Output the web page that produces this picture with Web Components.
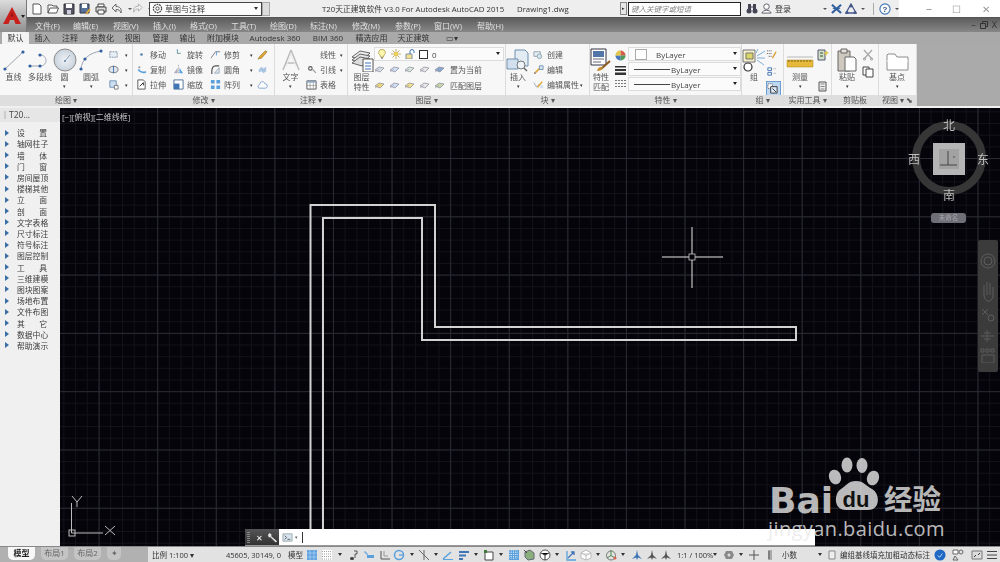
<!DOCTYPE html>
<html lang="zh"><head><meta charset="utf-8"><title>T20</title>
<style>
html,body{margin:0;padding:0;background:#000;width:1000px;height:562px;overflow:hidden}
</style></head><body>
<cad-app>
 <cad-title slot="title"></cad-title>
 <cad-menu slot="menu"></cad-menu>
 <cad-tabs slot="tabs"></cad-tabs>
 <cad-ribbon slot="ribbon">
  <rb-panel w="133" t="绘图 ▾">
   <rb-big n="line" l="直线" w="27"></rb-big><rb-big n="pline" l="多段线" w="26"></rb-big><rb-big n="circle" l="圆" w="23" c></rb-big><rb-big n="arc" l="圆弧" w="30" c></rb-big>
   <rb-col style="margin-left:2px"><rb-row n="rect" w="24" c></rb-row><rb-row n="hatch" w="24" c></rb-row><rb-row n="region" w="24" c></rb-row></rb-col>
  </rb-panel>
  <rb-panel w="142" t="修改 ▾" pad="3">
   <rb-col><rb-row n="move" l="移动" w="37"></rb-row><rb-row n="copy" l="复制" w="37"></rb-row><rb-row n="stretch" l="拉伸" w="37"></rb-row></rb-col>
   <rb-col><rb-row n="rotate" l="旋转" w="37"></rb-row><rb-row n="mirror" l="镜像" w="37"></rb-row><rb-row n="scale" l="缩放" w="37"></rb-row></rb-col>
   <rb-col><rb-row n="trim" l="修剪" w="47" c></rb-row><rb-row n="fillet" l="圆角" w="47" c></rb-row><rb-row n="array" l="阵列" w="47" c></rb-row></rb-col>
   <rb-col><rb-row n="pencil" w="12"></rb-row><rb-row n="explode" w="12"></rb-row><rb-row n="cloud" w="12"></rb-row></rb-col>
  </rb-panel>
  <rb-panel w="73" t="注释 ▾" pad="1">
   <rb-big n="text" l="文字" w="29" c></rb-big>
   <rb-col style="margin-left:1px"><rb-row n="" l="线性" w="41" c></rb-row><rb-row n="leader" l="引线" w="41" c></rb-row><rb-row n="table" l="表格" w="41"></rb-row></rb-col>
  </rb-panel>
  <rb-panel w="158" t="图层 ▾" pad="1">
   <rb-big n="layers" l="图层<br>特性" w="25"></rb-big>
   <rb-col style="gap:1px">
    <rb-combo w="130" h="14"><span style="display:inline-flex;align-items:center;gap:4px"><cad-i n="bulb" s="10"></cad-i><cad-i n="sun" s="10"></cad-i><cad-i n="lock" s="10"></cad-i><i style="width:7px;height:7px;border:1px solid #333;background:#fff"></i>0</span></rb-combo>
    <rb-layers l="置为当前" set="a"></rb-layers>
    <rb-layers l="匹配图层" set="b"></rb-layers>
   </rb-col>
  </rb-panel>
  <rb-panel w="84" t="块 ▾" pad="0">
   <rb-big n="insert" l="插入" w="24" c></rb-big>
   <rb-col style="margin-left:3px"><rb-row n="create" l="创建" w="54"></rb-row><rb-row n="bedit" l="编辑" w="54"></rb-row><rb-row n="battr" l="编辑属性" w="54" c></rb-row></rb-col>
  </rb-panel>
  <rb-panel w="152" t="特性 ▾" pad="0" corner>
   <rb-big n="match" l="特性<br>匹配" w="22"></rb-big>
   <rb-col style="margin-left:3px;width:10px;gap:3px;padding-top:3px"><cad-i n="wheel" s="11"></cad-i><cad-i n="lw" s="11"></cad-i><cad-i n="lt" s="11"></cad-i></rb-col>
   <rb-col style="margin-left:3px;gap:1px">
    <rb-combo w="113" h="14" ti="16"><span style="display:inline-flex;align-items:center;gap:9px"><i style="width:10px;height:9px;border:1px solid #aaa;background:#fff;margin-left:4px"></i>ByLayer</span></rb-combo>
    <rb-combo w="113" h="14"><span style="display:inline-flex;align-items:center;gap:1px"><i style="width:36px;height:1px;background:#444;margin-left:3px"></i>ByLayer</span></rb-combo>
    <rb-combo w="113" h="14"><span style="display:inline-flex;align-items:center;gap:1px"><i style="width:36px;height:1px;background:#444;margin-left:3px"></i>ByLayer</span></rb-combo>
   </rb-col>
  </rb-panel>
  <rb-panel w="42" t="组 ▾">
   <rb-big n="group" l="组" w="24"></rb-big>
   <rb-col style="gap:2px"><rb-row n="g1" w="14"></rb-row><rb-row n="g2" w="14"></rb-row><rb-row n="g3" w="15" on></rb-row></rb-col>
  </rb-panel>
  <rb-panel w="48" t="实用工具 ▾">
   <rb-big n="measure" l="测量" w="32" c></rb-big>
   <rb-col style="justify-content:space-between;padding:2px 0 3px;margin-left:1px"><cad-i n="quick" s="12"></cad-i><cad-i n="calc" s="11"></cad-i></rb-col>
  </rb-panel>
  <rb-panel w="47" t="剪贴板">
   <rb-big n="paste" l="粘贴" w="30" c></rb-big>
   <rb-col style="gap:5px;padding-top:2px"><cad-i n="cut" s="12"></cad-i><cad-i n="copyclip" s="12"></cad-i></rb-col>
  </rb-panel>
  <rb-panel w="38" t="视图 ▾ ⬊">
   <rb-big n="base" l="基点" w="36" c></rb-big>
  </rb-panel>
 </cad-ribbon>
 <cad-palette slot="palette">
  <pal-item>设置</pal-item><pal-item>轴网柱子</pal-item><pal-item>墙体</pal-item><pal-item>门窗</pal-item><pal-item>房间屋顶</pal-item><pal-item>楼梯其他</pal-item><pal-item>立面</pal-item><pal-item>剖面</pal-item><pal-item>文字表格</pal-item><pal-item>尺寸标注</pal-item><pal-item>符号标注</pal-item><pal-item>图层控制</pal-item><pal-item>工具</pal-item><pal-item>三维建模</pal-item><pal-item>图块图案</pal-item><pal-item>场地布置</pal-item><pal-item>文件布图</pal-item><pal-item>其它</pal-item><pal-item>数据中心</pal-item><pal-item>帮助演示</pal-item>
 </cad-palette>
 <cad-view slot="view"></cad-view>
 <cad-status slot="status"></cad-status>
</cad-app>
<baidu-mark></baidu-mark>
<script>
const BL='#3f74b5',GR='#7b7b7b',DK='#4a4a4a',LB='#5aa0dc';
const dot=(x,y,r=1.6,c='#2f5f9f')=>`<circle cx="${x}" cy="${y}" r="${r}" fill="${c}"/>`;
const I={
line:[24,`<path d="M3 21L21 4" stroke="#9aa6b2" stroke-width="1" fill="none"/>`+dot(3,21)+dot(21,4)],
pline:[24,`<path d="M2 18H12C20 18 20 7 12 7" stroke="#9aa6b2" fill="none"/>`+dot(2,18)+dot(12,18)+dot(12,7)],
circle:[24,`<defs><radialGradient id="g"><stop offset="0" stop-color="#eef2f7"/><stop offset="1" stop-color="#c9d2dc"/></radialGradient></defs><circle cx="12" cy="12" r="11" fill="url(#g)" stroke="#8b8b8b"/><path d="M12 13L17 7" stroke="#8fa4ba"/>`+dot(12,13,1,'#5f7fa5')],
arc:[24,`<path d="M2 21C3 11 10 5 22 3" stroke="#9aa6b2" fill="none"/>`+dot(2,21)+dot(6,11)+dot(22,3)],
rect:[12,`<path d="M2 3H10V9H2Z" fill="#e8eef5" stroke="#7a8b9c" stroke-dasharray="2 1"/>`],
hatch:[12,`<ellipse cx="6" cy="6" rx="5" ry="3.5" fill="#dde3ea" stroke="#777"/><path d="M6 2V10" stroke="#3f74b5"/>`],
region:[12,`<path d="M2 2H9V9H2Z" fill="#cfe0f2" stroke="#6f8fb0"/><path d="M7 7H11V11H7Z" fill="#fff" stroke="#777"/>`],
move:[10,dot(5,5,1.2,'#5a80ad')],
copy:[10,`<circle cx="3" cy="3" r="1" fill="#99a"/><path d="M2 5Q5 9 9 7" stroke="${LB}" stroke-width="1.6" fill="none"/>`],
stretch:[12,`<path d="M2 1H8L10 3V11H2Z" fill="#fff" stroke="#555"/><path d="M4 8L8 4M8 4V7" stroke="#222"/>`],
rotate:[10,`<path d="M4 1V4H7" stroke="#8aa" fill="none"/>`+dot(4,1,.7,LB)],
mirror:[12,`<path d="M5 10L1 10 5 4Z" fill="#aab"/><path d="M7 10L11 10 7 4Z" fill="${LB}"/><path d="M6 1V11" stroke="#999" stroke-dasharray="1 1"/>`],
scale:[12,`<path d="M1 1H11V11H1Z" fill="#fff" stroke="#4b6f95"/><path d="M1 5H7V11H1Z" fill="${BL}"/>`],
trim:[12,`<path d="M1 10L6 3H11" stroke="#778" fill="none"/><path d="M7 3V7" stroke="${LB}"/>`],
fillet:[12,`<path d="M10 2H6Q2 2 2 8V11" stroke="#555" fill="none" stroke-width="1.3"/><path d="M5 10L10 4V10Z" fill="#dfe6ee" stroke="#9ab"/>`],
array:[12,`<path d="M1 1h4v4H1zM7 1h4v4H7zM1 7h4v4H1zM7 7h4v4H7z" fill="${LB}"/>`],
pencil:[12,`<path d="M1 11L3 8 9 2 11 3 5 10Z" fill="#e0a63a" stroke="#8a6a20" stroke-width=".6"/>`],
explode:[12,`<path d="M2 6l3-3 2 2 3-2v5l-3 2-2-2-3 1z" fill="#a9c4e0"/>`],
cloud:[12,`<path d="M3 10C0 10 1 6 3 6 3 2 8 2 8.500 5 12 5 12 10 9 10Z" fill="#fff" stroke="#7aa0c8"/>`],
text:[24,`<path d="M12 2L4 22M12 2L20 22M7 15H17" stroke="#bcbcbc" stroke-width="1.5" fill="none"/><path d="M12 6L7 19M12 6L17 19" stroke="#ececec" fill="none"/>`],
leader:[10,`<circle cx="4" cy="4" r="1.6" fill="none" stroke="#555"/><path d="M6 5L9 8" stroke="#999"/>`],
table:[12,`<path d="M1 2H11V11H1Z" fill="#fff" stroke="#555"/><path d="M1 2H11V4H1Z" fill="#8ca6c4"/><path d="M1 7H11M4.500 4V11M8 4V11" stroke="#888" stroke-width=".7"/>`],
layers:[24,`<path d="M2 9L10 3 20 5 12 12Z" fill="#eee" stroke="#666"/><path d="M2 12L10 6 20 8 12 15Z" fill="#e4e4e4" stroke="#666"/><path d="M2 15L10 9 20 11 12 18Z" fill="#ddd" stroke="#666"/><path d="M13 11H23V24H13Z" fill="#fff" stroke="#555"/><path d="M15 15H21M15 18H21M15 21H21" stroke="#3f74b5"/>`],
bulb:[10,`<path d="M5 0.500a3 3 0 0 1 2 5.500L6.500 8h-3L3 6a3 3 0 0 1 2-5.500z" fill="#fff7b0" stroke="#a89030" stroke-width=".7"/><path d="M4 9h2" stroke="#555"/>`],
sun:[10,`<circle cx="5" cy="5" r="2.200" fill="#f7d95b" stroke="#a89030" stroke-width=".5"/><path d="M5 0V2M5 8V10M0 5H2M8 5H10M1.500 1.500L3 3M7 7L8.500 8.500M8.500 1.500L7 3M3 7L1.500 8.500" stroke="#a89030" stroke-width=".7"/>`],
lock:[10,`<path d="M1 5H7V10H1Z" fill="#f6df8f" stroke="#5f7fa5" stroke-width=".8"/><path d="M5 5V2.500A2 2 0 0 1 9 2.500V4" stroke="${BL}" fill="none"/>`],
insert:[24,`<path d="M9 2H19L22 5V18H9Z" fill="#e3ebf3" stroke="#6f8fb0"/><path d="M1 11H12V21H1Z" fill="#d2dfec" stroke="#6f8fb0"/><circle cx="15" cy="17" r="4" fill="#eef3f8" stroke="#777"/><path d="M18 20L21 23" stroke="#666" stroke-width="1.5"/>`],
create:[12,`<path d="M1 3H8V8H1Z" fill="#e6ecf3" stroke="#90a0b0"/><circle cx="7" cy="8" r="2.500" fill="#d8e2ed" stroke="#8aa"/>`],
bedit:[12,`<path d="M2 10L7 5" stroke="#e0a63a" stroke-width="1.800"/><path d="M7 2H11V6H7Z" fill="#dfe9f3" stroke="#6f8fb0"/>`+dot(2,10,1,'#889')],
battr:[12,`<path d="M1 4L4 9 6 6" stroke="#9ab" fill="none"/><path d="M5 9L10 3" stroke="#e0a63a" stroke-width="1.500"/><path d="M8 7H11V10H8Z" fill="#cfe0f2"/>`],
match:[24,`<path d="M2 1H17V17H2Z" fill="#fff" stroke="#334"/><path d="M4 3H15V9H4Z" fill="#5276a8"/><path d="M4 11H15M4 14H12" stroke="#667"/><path d="M12 21L21 13" stroke="#8a5a20" stroke-width="2"/><path d="M8 23C9 19 12 18 14 20 13 22 11 23 8 23Z" fill="#c58a2a"/>`],
wheel:[11,`<circle cx="5.500" cy="5.500" r="5" fill="#d9d9d9"/><path d="M5.500 5.500V.5A5 5 0 0 1 10.500 5.500Z" fill="#d95b4a"/><path d="M5.500 5.500H10.500A5 5 0 0 1 5.500 10.500Z" fill="#4f9a56"/><path d="M5.500 5.500V10.500A5 5 0 0 1 .5 5.500Z" fill="#4878c0"/><path d="M5.500 5.500H.5A5 5 0 0 1 5.500 .5Z" fill="#e2c64a"/>`],
lw:[11,`<path d="M0 2H11V3.500H0ZM0 5H11V7H0ZM0 8.500H11V11H0Z" fill="#333"/>`],
lt:[11,`<path d="M0 2.500H11M0 5.500H11M0 8.500H11" stroke="#777" stroke-dasharray="2 1"/>`],
group:[24,`<path d="M1 2H13V14H1Z" fill="#f3efcf" stroke="#777"/><path d="M4 5H11V11H4Z" fill="#d9d46c" stroke="#776"/><circle cx="6" cy="19" r="4" fill="#fff" stroke="#333" stroke-width="1.200"/><path d="M15 8L23 3M15 10H23M15 12L22 17M14 5L16 1" stroke="#7fb0dc"/>`],
g1:[12,`<path d="M1 2H7M1 5H7M3 8H6" stroke="#444" stroke-dasharray="1 1"/><path d="M7 10L11 3" stroke="#d69a2a" stroke-width="1.400"/>`],
g2:[12,`<path d="M2 2H6V5H2ZM2 7H6V10H2Z" fill="none" stroke="${BL}"/><path d="M8 3H11M8 8H11" stroke="#bbb"/>`],
g3:[12,`<path d="M1 1H6V6H1Z" fill="#fff" stroke="#555" stroke-dasharray="1 1"/><path d="M4 4H11V11H4Z" fill="#dbe8f6" stroke="#333"/><path d="M6 6L10 10" stroke="#333"/>`],
measure:[28,`<path d="M1 10H27V12H1Z" fill="#d7d7d7"/><path d="M1 14H27V21H1Z" fill="#e6b93a" stroke="#a9851f" stroke-width=".5"/><path d="M3 14v2M6 14v2M9 14v2M12 14v2M15 14v2M18 14v2M21 14v2M24 14v2" stroke="#7d621a"/>`],
quick:[12,`<path d="M1 1H8V11H1Z" fill="#cfe3c4" stroke="#557"/><path d="M3 4H6M3 7H6" stroke="#444"/><path d="M9 1l1 2 2 .5-2 1.500-1 2-1-2-1-1.500 2-.5z" fill="#e2c64a"/>`],
calc:[11,`<path d="M2 1H9V10H2Z" fill="#eee" stroke="#555"/><path d="M3.500 3H7.500M3.500 5.500H7.500M3.500 8H7.500" stroke="#888"/>`],
paste:[24,`<path d="M3 3H15V23H3Z" fill="#cfc8be" stroke="#666"/><path d="M6 1H12V5H6Z" fill="#e5e1da" stroke="#666"/><path d="M10 9H19L21 11V23H10Z" fill="#fff" stroke="#666"/>`],
cut:[12,`<path d="M2 1L10 10M10 1L2 10" stroke="#aaa" stroke-width="1.300"/><circle cx="2.500" cy="10" r="1.200" fill="none" stroke="#aaa"/><circle cx="9.500" cy="10" r="1.200" fill="none" stroke="#aaa"/>`],
copyclip:[12,`<path d="M1 1H7V9H1Z" fill="#fff" stroke="#444"/><path d="M4 3H11V11H4Z" fill="#fff" stroke="#444"/>`],
base:[24,`<path d="M2 7V22H23V9H12L10 6H3Z" fill="#fff" stroke="#8c8c8c"/><path d="M2 13H23" stroke="#fff"/>`],
qnew:[12,`<path d="M2 1H8L10 3V11H2Z" fill="#fff" stroke="#555"/>`],
qopen:[12,`<path d="M1 10V2H5L6 3H10V5M1 10L3 5H11.500L9.500 10Z" fill="#fff" stroke="#555"/>`],
qsave:[12,`<path d="M1 1H11V11H1Z" fill="#556" stroke="#333"/><path d="M3 1H9V5H3Z" fill="#fff"/><path d="M4 7H8V11H4Z" fill="#ccd"/>`],
qsaveas:[12,`<path d="M1 1H10V10H1Z" fill="#56709a" stroke="#334"/><path d="M3 1H8V5H3Z" fill="#fff"/><path d="M7 11L11 6" stroke="#e0a63a" stroke-width="2"/>`],
qprint:[12,`<path d="M3 1H9V4H3Z" fill="#fff" stroke="#444"/><path d="M1 4H11V9H1Z" fill="#ddd" stroke="#444"/><path d="M3 7H9V11H3Z" fill="#fff" stroke="#444"/>`],
undo:[12,`<path d="M1 5L5 1V3.500C9 3.500 11 6 10 10 9 7.500 8 6.500 5 6.500V9Z" fill="#eee" stroke="#666"/>`],
redo:[12,`<path d="M11 5L7 1V3.500C3 3.500 1 6 2 10 3 7.500 4 6.500 7 6.500V9Z" fill="#f3f3f3" stroke="#aaa"/>`],
gear:[12,`<circle cx="6" cy="6" r="4.500" fill="none" stroke="#444" stroke-dasharray="2 .8" stroke-width="1.300"/><circle cx="6" cy="6" r="1.800" fill="#fff" stroke="#444"/>`],
bino:[12,`<circle cx="3" cy="8" r="2.500" fill="#445"/><circle cx="9" cy="8" r="2.500" fill="#445"/><path d="M2 1H5V7H2ZM7 1H10V7H7Z" fill="#445"/><path d="M5 4H7" stroke="#445"/>`],
person:[12,`<circle cx="6" cy="4" r="3" fill="#fff" stroke="#556"/><path d="M1 11C2 7 10 7 11 11Z" fill="#fff" stroke="#556"/>`],
xmark:[12,`<path d="M1 2L11 11M11 2L1 11" stroke="#2f5f9f" stroke-width="2.300"/><path d="M2 6H10" stroke="#2f5f9f"/>`],
a360:[12,`<path d="M6 1L11 10H1Z" fill="none" stroke="#46588a" stroke-width="1.300"/><circle cx="6" cy="3" r="1.500" fill="#46588a"/><circle cx="2" cy="9.500" r="1.500" fill="#46588a"/><circle cx="10" cy="9.500" r="1.500" fill="#46588a"/>`],
help:[13,`<circle cx="6.500" cy="6.500" r="5.500" fill="#fff" stroke="#3f74b5" stroke-width="1.200"/><text x="6.500" y="9.500" font-size="8.500" font-weight="700" text-anchor="middle" fill="#2f4f7f" font-family="Liberation Sans">?</text>`],
fsnap:[12,`<path d="M7 2H10V5H8V9" fill="none" stroke="#555"/><rect x="3" y="8" width="4" height="3" rx="1.500" fill="#444"/>`],
s_dyn:[12,`<path d="M1 3H3V5H5" stroke="${LB}" fill="none"/><path d="M4 6H11V9H4Z" fill="${LB}"/>`],
s_ang:[12,`<path d="M2 2V10H11" stroke="#555" fill="none"/><path d="M5 2V7H9" stroke="#999" fill="none"/>`],
s_pol:[12,`<circle cx="6" cy="6" r="4.500" fill="none" stroke="${LB}" stroke-width="1.500"/><path d="M6 6H10" stroke="${LB}" stroke-width="1.300"/>`],
s_osn:[12,`<path d="M1 1L11 11M6 1V11" stroke="#666"/>`],
s_lw:[12,`<path d="M1 10L9 3" stroke="${LB}" stroke-width="1.500"/><path d="M1 10.500H11" stroke="${LB}"/>`],
s_sq:[12,`<path d="M2 3H10V11H2Z" fill="#fff" stroke="#444"/><rect x="1" y="1" width="3" height="3" fill="#3a7a3a"/>`],
s_bars:[12,`<path d="M1 2H11V4H1ZM1 5.500H8V7.500H1ZM1 9H5V11H1Z" fill="${BL}"/>`],
s_check:[12,`<path d="M1 1H11V11H1Z" fill="${LB}"/><path d="M1 3H11M1 5.500H11M1 8H11M3 1V11M5.500 1V11M8 1V11" stroke="#fff" stroke-width=".6" stroke-dasharray="1 1"/>`],
s_cube:[12,`<path d="M2 3L7 1 11 4V10L5 11 2 8Z" fill="#89b07c" stroke="#667"/><path d="M1 1L4 4" stroke="#444"/>`],
s_3d:[12,`<circle cx="6" cy="6" r="5" fill="#fff" stroke="#555"/><path d="M2 4L6 6 10 4M6 6V11" stroke="#333"/>`],
s_axis:[12,`<path d="M2 2V11H11" stroke="${LB}" fill="none" stroke-width="1.300"/><path d="M3 9L9 3M6 3H9V6" stroke="${BL}" fill="none" stroke-width="1.300"/>`],
s_cb:[12,`<path d="M6 1L11 4V9L6 11 1 9V4Z M1 4L6 6.500 11 4M6 6.500V11" fill="#fff" stroke="#bbb"/>`],
s_gizmo:[12,`<circle cx="6" cy="6.500" r="4.500" fill="none" stroke="#777"/><path d="M6 1V6.500L2 9M6 6.500L10 9" stroke="#4f8a4f" fill="none"/><circle cx="10" cy="9" r="1.500" fill="#d9604a"/>`],
s_anno1:[12,`<path d="M6 1L7 6 11 10 7 8.500 6 11 5 8.500 1 10 5 6Z" fill="${BL}"/>`],
s_anno2:[12,`<path d="M6 1L7 6 11 10 7 8.500 6 11 5 8.500 1 10 5 6Z" fill="#555"/>`],
s_gear:[12,`<path d="M3 2H9L11 6 9 10H3L1 6Z" fill="#8a8a8a"/><circle cx="6" cy="6" r="1.500" fill="#ddd"/>`],
s_plus:[12,`<path d="M6 1V11M1 6H11" stroke="#555"/>`],
s_units:[12,`<path d="M4 1H8V11H4Z" fill="#aaa"/><path d="M4 3H6M4 5H6M4 7H6M4 9H6" stroke="#555"/>`],
s_box:[12,`<path d="M3 2H9V10H3Z" fill="#eee" stroke="#888"/>`],
s_blue:[13,`<circle cx="6.500" cy="6.500" r="6" fill="#1f69c4"/><path d="M4 7L6 9 9 5" stroke="#cfe2f7" fill="none"/>`],
s_iso:[12,`<path d="M1 1H6V5H1Z" fill="#fff" stroke="#666"/><circle cx="9" cy="3" r="2" fill="none" stroke="#666"/><path d="M3 7L1 11H6Z" fill="none" stroke="#666"/>`],
s_full:[12,`<path d="M1 2H11V10H1Z" fill="#ddd" stroke="#777"/><path d="M3 8L5 6M9 4L7 6" stroke="#333"/>`],
s_menu:[12,`<path d="M1 2.500H11M1 6H11M1 9.500H11" stroke="#444"/>`],
s_grid:[12,`<path d="M1 1H11V11H1Z" fill="#63a4e0"/><path d="M4 1V11M8 1V11M1 4H11M1 8H11" stroke="#b5d5f2" stroke-width=".6"/>`],
s_dots:[12,`<path d="M1 1H11V11H1Z" fill="#fff"/><path d="M1 2.500H11M1 5H11M1 7.500H11M1 10H11" stroke="#777" stroke-width=".7" stroke-dasharray="1 1"/>`],
pr:[12,`<path d="M1 2H11V10H1Z" fill="#d7e3f0" stroke="#9aa"/><path d="M3 4L5 6 3 8M6 8H9" stroke="#555" fill="none"/>`],
wrench:[12,`<path d="M1 3L3 1 5 3 4.500 4.500 11 10 9.500 11.500 3.500 5.500 2 6Z" fill="#e4e4e4"/>`],
};
function svg(n,s){const d=I[n];if(!d)return '';return `<svg xmlns="http://www.w3.org/2000/svg" width="${s||d[0]}" height="${s||d[0]}" viewBox="0 0 ${d[0]} ${d[0]}" style="display:block">${d[1]}</svg>`}
const def=(n,css,html)=>customElements.define(n,class extends HTMLElement{
 constructor(){super();this.attachShadow({mode:'open'})}
 connectedCallback(){if(this._d)return;this._d=1;const h=typeof html=='function'?html(this):html;this.shadowRoot.innerHTML=`<style>${typeof css=='function'?css(this):css}</style>${h}`;}
});
const A=(e,k)=>e.getAttribute(k);
const CJK='"Open Sans","Noto Sans CJK SC",sans-serif';
def('cad-i',':host{display:block;flex:none}',e=>svg(A(e,'n'),+A(e,'s')||0));
def('cad-app',`:host{display:grid;width:1000px;height:562px;grid-template-columns:60px 940px;grid-template-rows:18px 14px 12px 64px 438px 16px;font:8px ${CJK};color:#444;background:#f0f0f0;filter:blur(.4px)}
 .a{grid-column:1/3}.p{grid-column:1;min-height:0}.v{grid-column:2;min-height:0}.logo{position:absolute;left:0;top:0;width:26px;height:32px;background:linear-gradient(#dcdcdc,#8e8e8e);border-right:1px solid #777;border-bottom-right-radius:1px}
 .logo svg{position:absolute;left:3px;top:7px} .logo i{position:absolute;right:1px;top:15px;border:2px solid transparent;border-top:3px solid #222}`,
`<div class="a"><slot name="title"></slot></div><div class="a"><slot name="menu"></slot></div><div class="a"><slot name="tabs"></slot></div><div class="a"><slot name="ribbon"></slot></div><div class="p"><slot name="palette"></slot></div><div class="v"><slot name="view"></slot></div><div class="a"><slot name="status"></slot></div>
<div class="logo"><svg width="18" height="17" viewBox="0 0 18 17"><path d="M9 0L18 17H12.500L11 13H7L5.500 17H0Z" fill="#c8201c"/><path d="M9 5L7.500 9.500H10.500Z" fill="#8f1410"/></svg><i></i></div>`);
def('cad-title',`:host{display:flex;height:18px;align-items:center;background:linear-gradient(90deg,#eee 0,#eee 899px,#fff 899px);position:relative;color:#333;border-bottom:1px solid #555;box-sizing:border-box}
 .q{display:flex;align-items:center;margin-left:31px;gap:4px;width:116px}.c{width:6px;height:6px;position:relative}.c:after{content:"";position:absolute;left:1px;top:2px;border:2px solid transparent;border-top:2.500px solid #555}
 .ws{width:113px;height:14px;margin-left:2px;background:#fbfbfb;border:1px solid #444;box-sizing:border-box;display:flex;align-items:center;gap:2px;padding-left:2px;color:#333;position:relative}
 .ws .d{position:absolute;right:3px;top:4px;border:2.500px solid transparent;border-top:3px solid #333}
 .sb{width:8px;height:14px;background:#ddd;border:1px solid #aaa;box-sizing:border-box;margin-right:0}
 .t{margin-left:52px;font-size:7.800px;white-space:nowrap;width:195px}.t2{font-size:7.800px;width:103px;white-space:nowrap}
 .ar{width:7px;height:13px;background:#e8e8e8;border:1px solid #888;box-sizing:border-box;font-size:5px;line-height:11px;text-align:center;margin-right:1px}
 .in{width:113px;height:14px;background:#fff;border:1px solid #222;box-sizing:border-box;font:italic 7.500px ${CJK};color:#888;padding-left:2px;line-height:12px}
 .r{display:flex;align-items:center;gap:3px;margin-left:5px}.lg{width:44px;white-space:nowrap}
 .w{position:absolute;top:0;height:17px;font-size:12px;color:#999;display:flex;align-items:center}
 .sep{width:1px;height:12px;background:#aaa;margin:0 2px 0 4px}`,
`<div class="q">${['qnew','qopen','qsave','qsaveas','qprint','undo'].map(n=>`<cad-i n="${n}" s="12"></cad-i>`).join('')}<span class="c"></span><cad-i n="redo" s="11"></cad-i><span class="c"></span></div>
<div class="ws"><cad-i n="gear" s="11"></cad-i>草图与注释<span class="d"></span></div><div class="sb"></div>
<div class="t">T20天正建筑软件 V3.0 For Autodesk AutoCAD 2015</div><div class="t2">Drawing1.dwg</div>
<div class="ar">▸</div><div class="in">键入关键字或短语</div>
<div class="r"><cad-i n="bino" s="12"></cad-i><cad-i n="person" s="11"></cad-i><span class="lg">登录</span><span class="c"></span><cad-i n="xmark" s="11"></cad-i><cad-i n="a360" s="12"></cad-i><span class="c"></span><span class="sep"></span><cad-i n="help" s="12"></cad-i><span class="c"></span></div>
<div class="w" style="left:926px">–</div><div class="w" style="left:952px;font-size:10px">☐</div><div class="w" style="left:982px;font-size:10px">✕</div>`);
def('cad-menu',`:host{display:flex;height:14px;align-items:center;background:linear-gradient(#5d5d5d,#878787);color:#e0e0e0;padding-left:29px;position:relative}
 span{white-space:nowrap;padding-left:6px;box-sizing:border-box;flex:none}.w{position:absolute;right:3px;top:0;color:#333;font-size:9px;line-height:14px;display:flex;gap:4px;align-items:center;height:14px}`,
`${[['文件(F)',38],['编辑(E)',40],['视图(V)',40],['插入(I)',37],['格式(O)',41],['工具(T)',39],['绘图(D)',40],['标注(N)',42],['修改(M)',43],['参数(P)',39],['窗口(W)',43],['帮助(H)',40]].map(([t,w])=>`<span style="width:${w}px">${t}</span>`).join('')}<div class="w">–<svg width="8" height="8" viewBox="0 0 8 8"><path d="M2.500 2.500V.5H7.500V5.500H5.500M.5 2.500H5.500V7.500H.5Z" fill="none" stroke="#333"/></svg>X</div>`);
def('cad-tabs',`:host{display:flex;height:12px;align-items:stretch;background:#a9a9a9;color:#333;line-height:12px;padding-left:2px}
 span{white-space:nowrap;padding:0;text-align:center;flex:none}.on{background:#f3f3f3;border-radius:1px 1px 0 0}`,
`${[['默认',27,1],['插入',27],['注释',28],['参数化',36],['视图',25],['管理',31],['输出',23],['附加模块',48],['Autodesk 360',56],['BIM 360',50],['精选应用',37],['天正建筑',47]].map(([t,w,o])=>`<span class="${o?'on':''}" style="width:${w}px">${t}</span>`).join('')}<span style="margin-left:9px">▭▾</span>`);
def('cad-ribbon',`:host{display:flex;height:64px;background:#aaaaaa;box-sizing:border-box;border-bottom:2px solid #f0f0f0}`,'<slot></slot>');
def('rb-panel',e=>`:host{display:flex;flex-direction:column;width:${A(e,'w')}px;flex:none;box-sizing:border-box;border-right:1px solid #dcdcdc;background:#f7f7f7}
 .b{flex:1;display:flex;padding:3px 0 0 ${A(e,'pad')||0}px;min-height:0}.t{height:11px;line-height:10px;text-align:center;background:#dedede;color:#555}`,
 e=>`<div class="b"><slot></slot></div><div class="t">${A(e,'t')}</div>`);
def('rb-big',e=>`:host{display:flex;flex-direction:column;align-items:center;width:${A(e,'w')}px;flex:none;line-height:10px;color:#555;text-align:center;white-space:nowrap}
 .i{height:25px;display:flex;align-items:center;justify-content:center}.c{font-size:5px;line-height:8px;color:#333}`,
 e=>`<div class="i">${svg(A(e,'n'),0)}</div><div>${A(e,'l')}</div>${e.hasAttribute('c')?'<div class="c">▾</div>':''}`);
def('rb-col',':host{display:flex;flex-direction:column;flex:none;justify-content:flex-start}','<slot></slot>');
def('rb-row',e=>`:host{display:flex;align-items:center;width:${A(e,'w')}px;height:15px;color:#555;white-space:nowrap;flex:none;box-sizing:border-box;${e.hasAttribute('on')?'background:#bdd7f0;border:1px solid #6f9fd0;':''}}
 .i{width:11px;display:flex;justify-content:center;flex:none}.l{margin-left:3px}.c{font-size:5px;margin-left:auto;margin-right:4px;color:#333}`,
 e=>`<div class="i">${svg(A(e,'n'),11)}</div>${A(e,'l')?`<div class="l">${A(e,'l')}</div>`:''}${e.hasAttribute('c')?'<div class="c">▾</div>':''}`);
def('rb-combo',e=>`:host{display:flex;align-items:center;width:${A(e,'w')}px;height:${A(e,'h')}px;box-sizing:border-box;background:#fbfbfb;border:1px solid #dcdcdc;color:#444;position:relative;padding-left:2px;font-size:8px}
 i{position:absolute;right:3px;top:4px;border:2.500px solid transparent;border-top:3px solid #222}`,`<slot></slot><i></i>`);
def('rb-layers',`:host{display:flex;align-items:center;height:15px;color:#555;padding-left:0;white-space:nowrap}cad-i{margin-right:4px}.l{margin-left:1px}`,
 e=>{const a=A(e,'set')=='a';const c=a?['#d8dee8','#cfe0f2','#d8e8d8','#e8e8e8','#88a8d0']:['#f0d878','#cfe0f2','#f0e08a','#e8e8e8','#c8d8a8'];
 return c.map(x=>`<svg width="11" height="11" viewBox="0 0 11 11" style="margin-right:4px;flex:none"><path d="M1 6L5 3 10 4 6 8Z" fill="${x}" stroke="#889" stroke-width=".7"/><path d="M1 8L5 5" stroke="#99a" stroke-width=".6"/></svg>`).join('')+`<div class="l">${A(e,'l')}</div>`});
def('cad-palette',`:host{display:flex;flex-direction:column;height:438px;background:#f0f0f0;box-sizing:border-box}
 .h{height:14px;background:#e6e6e6;line-height:14px;padding-left:9px;margin-bottom:5px;color:#444;font-size:8.500px;position:relative}.h:before{content:"";position:absolute;left:4px;top:3px;width:2px;height:8px;background:#ccc}`,
 `<div class="h">T20...</div><slot></slot>`);
def('pal-item',`:host{display:flex;align-items:center;height:11.210px;padding-left:5px;color:#3c3c3c;font-size:7.800px}
 i{border:3px solid transparent;border-left:4px solid #3a6ea5;border-right:0;margin-right:4px;flex:none;width:0;height:0}span{width:30px;text-align:justify;text-align-last:justify;margin-left:4px;white-space:nowrap}`,
 `<i></i><span><slot></slot></span>`);
def('cad-view',`:host{display:block;position:relative;width:940px;height:438px;overflow:hidden;background-color:#04040a;
  background-image:
   linear-gradient(90deg,#2a2a34 1px,transparent 1px),linear-gradient(#2a2a34 1px,transparent 1px),
   linear-gradient(90deg,#121218 1px,transparent 1px),linear-gradient(#121218 1px,transparent 1px);
  background-size:58.600px 58.300px,58.600px 58.300px,11.720px 11.660px,11.720px 11.660px;
  background-position:38.600px 50px,38.600px 50px,3.400px 3.400px,3.400px 3.400px}
 svg{position:absolute;left:0;top:0}.lab{position:absolute;left:2px;top:3px;color:#c8c8c8;font-size:8px;white-space:nowrap}
 .cmd{position:absolute;left:185px;bottom:0;width:570px;height:17px;display:flex;background:#fff;align-items:center;border-bottom:1px solid #999;box-sizing:border-box}
 .hd{width:34px;height:100%;background:linear-gradient(#555,#333);display:flex;align-items:center;padding-left:2px;box-sizing:border-box;color:#fff;font-size:8px;flex:none}
 .grip{width:3px;height:11px;background:repeating-linear-gradient(#888 0 1px,transparent 1px 2px);margin-right:6px;flex:none}
 .cur{width:1px;height:11px;background:#333;margin-left:4px}.drop{font-size:5px;color:#666;margin-left:2px}
 .nav{position:absolute;left:918px;top:132px;width:20px;height:132px;background:#3b3b3b;border-radius:2px;display:flex;flex-direction:column;align-items:center;gap:2px;padding-top:11px;box-sizing:border-box}
 .pill{position:absolute;left:871px;top:105px;width:35px;height:10px;border-radius:3px;background:#6f6f78;color:#a8a8ae;font-size:6.500px;line-height:10px;text-align:center}`,
 `<svg width="940" height="438" viewBox="60 108 940 438">
  <path d="M310.500 530V205H435V327H796V340H422V218H323V530" fill="none" stroke="#d2d2d2" stroke-width="2"/>
  <path d="M662 257H689M695 257H723M692 227V254M692 260V288" stroke="#e6e6e6" stroke-width="1" /><rect x="689" y="254" width="6" height="6" fill="none" stroke="#c8c8c8" stroke-width=".8"/>
  <circle cx="949" cy="158" r="33" fill="none" stroke="#363636" stroke-width="8"/>
  <rect x="933" y="143" width="32" height="32" fill="#b5b5b5"/><rect x="939" y="149" width="20" height="20" fill="#a2a2a2"/>
  <path d="M948 151V165M940 165H957" stroke="#444"/><circle cx="954" cy="157" r=".8" fill="#444"/>
  <g fill="#bdbdbd" font-size="12" text-anchor="middle" font-family="Noto Sans CJK SC"><text x="949" y="130">北</text><text x="949" y="200">南</text><text x="914" y="164">西</text><text x="983" y="164">东</text></g>
  <g stroke="#bdbdbd" fill="none"><path d="M71.500 503V533H103"/><rect x="69" y="530" width="6" height="6"/><path d="M72 496L77 502 82 496M77 502V507M105 526L115 535M115 526L105 535" stroke-width="1"/></g>
 </svg>
 <div class="lab">[−][俯视][二维线框]</div><div class="pill">未命名</div>
 <div class="nav"><svg style="position:static" width="18" height="112" viewBox="0 0 18 112"><g fill="none" stroke="#5c5c5c"><circle cx="9" cy="10" r="7"/><circle cx="9" cy="10" r="4"/><path d="M5 45V34M8 44V31M11 44V32M14 46V36M5 44C6 52 12 52 14 46"/><path d="M3 58L9 64M9 58L3 64"/><circle cx="12" cy="67" r="3"/><path d="M2 85H15M8 79V91M5 82H12M5 88H12"/><path d="M2 98h3v3H2zM7 98h3v3H7zM12 98h3v3H12zM3 104H15V112H3Z"/></g></svg></div>
 <div class="cmd"><div class="hd"><span class="grip"></span><span>✕</span><cad-i n="wrench" s="11" style="margin-left:4px"></cad-i></div><div style="margin-left:3px"><cad-i n="pr" s="11"></cad-i></div><span class="drop">▾</span><span class="cur"></span></div>`);
const sx=[['t',152,'比例 1:100 ▾',40],['t',226,'45605, 30149, 0',57],['t',288,'模型',15],['i',312,'s_grid'],['i',327,'s_dots'],['c',340],['i',353,'fsnap'],['i',369,'s_dyn'],['i',385,'s_ang'],['i',399,'s_pol'],['c',412],['i',424,'s_osn'],['c',436],['i',448,'s_lw'],['i',464,'s_bars'],['c',476],['i',489,'s_sq'],['c',501],['i',514,'s_check'],['i',529,'s_cube'],['i',545,'s_3d'],['c',557],['i',571,'s_axis'],['i',586,'s_cb'],['c',598],['i',611,'s_gizmo'],['c',623],['i',637,'s_anno1'],['i',652,'s_anno2'],['i',666,'s_anno2'],['t',677,'1:1 / 100%',35],['c',715],['i',729,'s_gear'],['c',741],['i',754,'s_plus'],['i',770,'s_units'],['t',782,'小数',16],['c',820],['i',832,'s_box'],['t',840,'编组基线填充加粗动态标注',92],['i',940,'s_blue'],['i',958,'s_iso'],['i',977,'s_full'],['i',992,'s_menu']];
def('cad-status',`:host{display:flex;height:16px;align-items:center;background:#e2e2e2;border-top:1px solid #888;box-sizing:border-box;position:relative;color:#333;white-space:nowrap;font-size:7.500px}
 .tabs{width:148px;height:100%;background:#b1b1b1;display:flex;align-items:flex-end;flex:none;padding-left:8px;box-sizing:border-box}
 .tb{height:13px;width:27px;text-align:center;line-height:12px;color:#666;background:#c4c4c4;border-radius:0 0 5px 5px;margin-right:6px;font-size:8px;transform:translateY(-2px);flex:none}
 .tb.on{background:#f8f8f8;color:#222;font-weight:700}.t{flex:none}.car{width:7px;flex:none;position:relative;height:6px}.car:after{content:"";position:absolute;left:1px;top:1px;border:2.500px solid transparent;border-top:3px solid #333}`,
 ()=>{let x=148,h='';for(const s of sx){const w=s[0]=='t'?s[3]:s[0]=='i'?12:7;const l=s[0]=='t'?s[1]:s[1]-w/2;const m=l-x;const st=`margin-left:${m}px;width:${w}px`;h+=s[0]=='t'?`<div class="t" style="${st}">${s[2]}</div>`:s[0]=='i'?`<cad-i style="${st}" n="${s[2]}" s="12"></cad-i>`:`<span class="car" style="${st}"></span>`;x=l+w}
 return `<div class="tabs"><div class="tb on">模型</div><div class="tb">布局1</div><div class="tb">布局2</div><div class="tb" style="width:14px">✦</div></div>`+h});
def('baidu-mark',`:host{position:absolute;left:760px;top:450px;width:200px;height:100px;pointer-events:none}`,
 `<svg width="200" height="100" viewBox="760 450 200 100" style="display:block"><g fill="#e8e8e8" fill-opacity=".8">
 <ellipse cx="835" cy="477" rx="6" ry="7.500" transform="rotate(-20 835 477)"/><ellipse cx="847" cy="465" rx="5.500" ry="7.500"/><ellipse cx="862" cy="465.500" rx="5.500" ry="7.500"/><ellipse cx="873" cy="478" rx="6" ry="7.500" transform="rotate(20 873 478)"/>
 <path d="M856 481C848 481 846 486 841 489 834 493 833 510 846 510 851 510 860 510 868 510 881 510 880 493 872 489 866 486 864 481 856 481Z"/>
 <text x="769" y="513" font-family="DejaVu Sans" font-weight="700" font-size="36">Bai</text>
 <text x="856" y="507" font-family="Liberation Sans" font-weight="700" font-size="22" text-anchor="middle" fill="#111" fill-opacity="1">du</text>
 <text x="884" y="510" font-family="Noto Sans CJK SC" font-weight="700" font-size="28.500">经验</text>
 <text x="768" y="536" font-family="Open Sans" font-size="20" letter-spacing=".4">jingyan.baidu.com</text></g></svg>`);
</script>
</body></html>
